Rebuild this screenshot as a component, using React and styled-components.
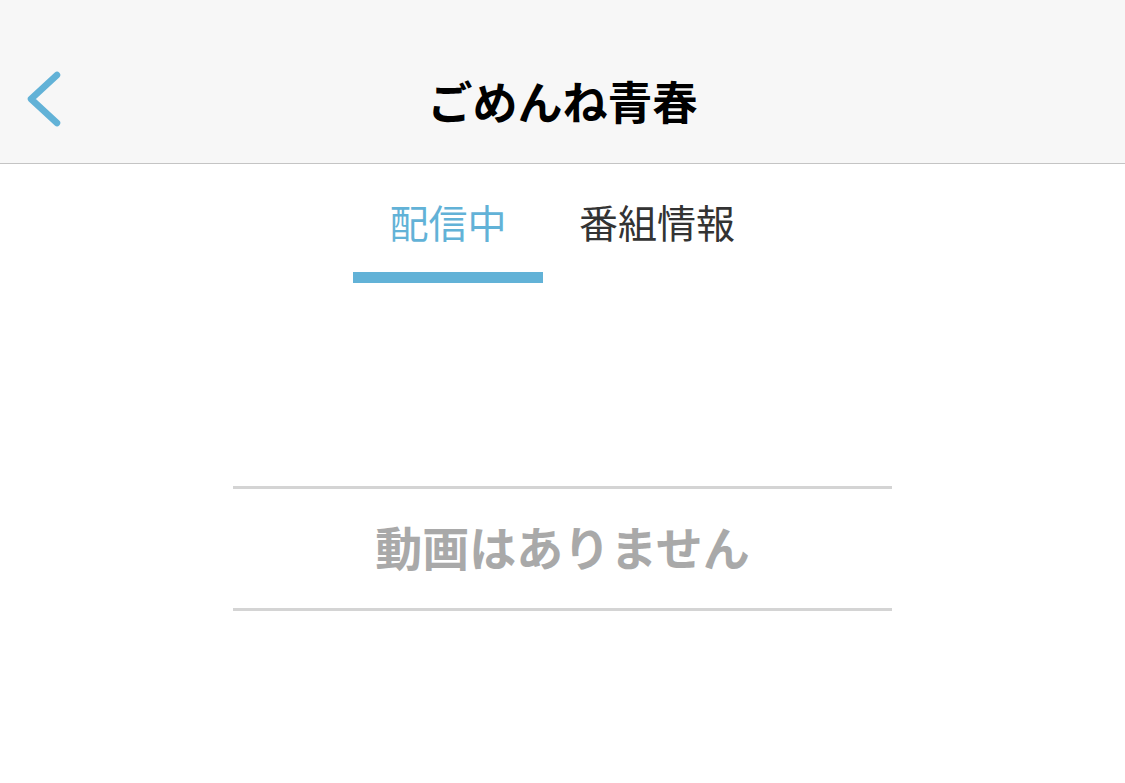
import styled, { createGlobalStyle } from 'styled-components'

const GlobalStyle = createGlobalStyle`
  html, body {
    margin: 0;
    padding: 0;
    background: #fff;
    font-family: 'Noto Sans CJK JP', 'Noto Sans', sans-serif;
  }
`

const tabs = ['配信中', '番組情報']

const App = () => {
  return (
    <Page>
      <GlobalStyle />
      <Header>
        <BackButton aria-label="戻る">
          <svg width="44" height="64" viewBox="0 0 44 64" fill="none">
            <path d="M32 9 L6 33 L32 57" stroke="#62b2d7" strokeWidth="6.5" strokeLinecap="round" strokeLinejoin="round" />
          </svg>
        </BackButton>
        <Title>ごめんね青春</Title>
      </Header>
      <TabBar>
        { tabs.map((t, i) => (
          <Tab key={ t }>
            <TabLabel active={ i === 0 }>{ t }</TabLabel>
            <Indicator active={ i === 0 } />
          </Tab>
        )) }
      </TabBar>
      <Empty>
        <EmptyText>動画はありません</EmptyText>
      </Empty>
    </Page>
  )
}

export default App

const Page = styled.div`
  width: 100%;
  min-height: 783px;
  background: #fff;
`

const Header = styled.header`
  position: relative;
  height: 126px;
  padding-top: 37px;
  background: #f7f7f7;
  border-bottom: 1px solid #c4c4c4;
  display: flex;
  align-items: center;
  justify-content: center;
`

const BackButton = styled.button`
  position: absolute;
  left: 25px;
  top: 66px;
  padding: 0;
  border: none;
  background: transparent;
  display: flex;
  cursor: pointer;
`

const Title = styled.h1`
  margin: 0;
  font-size: 45px;
  font-weight: 700;
  color: #000;
`

const TabBar = styled.nav`
  display: flex;
  justify-content: center;
  gap: 19px;
  padding-top: 33px;
  padding-right: 20px;
`

const Tab = styled.div`
  width: 190px;
  display: flex;
  flex-direction: column;
  align-items: center;
  cursor: pointer;
`

const TabLabel = styled.span`
  font-size: 39px;
  line-height: 48px;
  font-weight: 400;
  color: ${props => props.active ? '#62b2d7' : '#333'};
`

const Indicator = styled.div`
  margin-top: 27px;
  width: 100%;
  height: 11px;
  background: ${props => props.active ? '#62b2d7' : 'transparent'};
`

const Empty = styled.section`
  width: 659px;
  margin: 203px auto 0;
  height: 119px;
  border-top: 3px solid #d4d4d4;
  border-bottom: 3px solid #d4d4d4;
  display: flex;
  align-items: center;
  justify-content: center;
`

const EmptyText = styled.p`
  margin: 0 0 6px;
  font-size: 47px;
  font-weight: 700;
  color: #a9a9a9;
`
